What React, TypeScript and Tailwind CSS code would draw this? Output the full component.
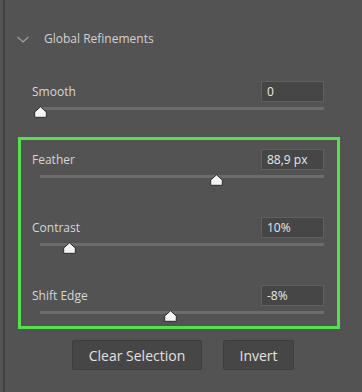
const font = "font-['Open_Sans',_'Noto_Sans',_sans-serif]";

function Thumb({ pct }: { pct: number }) {
  return (
    <svg
      className="absolute top-0 -ml-[6.5px]"
      style={{ left: `${pct}%` }}
      width="13"
      height="12"
      viewBox="0 0 13 12"
    >
      <polygon
        points="6.5,0.8 12.3,6 12.3,11.3 0.7,11.3 0.7,6"
        fill="#f4f4f4"
        stroke="#2c2c2c"
        strokeWidth="1"
        strokeLinejoin="round"
      />
    </svg>
  );
}

function SliderRow({
  label,
  value,
  pct,
}: {
  label: string;
  value: string;
  pct: number;
}) {
  return (
    <div className="flex flex-col">
      <div className="flex h-[21px] items-center justify-between">
        <span className="text-[12px] text-[#d6d6d6]">{label}</span>
        <div className="flex h-[21px] w-[63px] items-center border border-[#5f5f5f] bg-[#464646] pl-[5px] text-[12px] text-[#e8e8e8]">
          {value}
        </div>
      </div>
      <div className="relative mt-[4px] ml-[8px] h-[12px]">
        <div className="absolute inset-x-0 top-[1px] h-[3px] bg-[#6c6c6c]" />
        <Thumb pct={pct} />
      </div>
    </div>
  );
}

export default function App() {
  return (
    <div className={`flex h-[392px] w-[362px] overflow-hidden bg-[#535353] ${font}`}>
      <div className="ml-[3px] w-[2px] bg-[#424242]" />
      <div className="flex flex-1 flex-col">
        {/* header */}
        <div className="mt-[30px] flex h-[18px] items-center pl-[12px]">
          <svg width="12" height="7" viewBox="0 0 12 7" className="text-[#a8a8a8]">
            <polyline points="0.5,0.8 6,6 11.5,0.8" fill="none" stroke="currentColor" strokeWidth="1.1" />
          </svg>
          <span className="ml-[15px] text-[12px] text-[#d2d2d2]">Global Refinements</span>
        </div>

        {/* smooth */}
        <div className="mt-[33px] pr-[38px] pl-[27px]">
          <SliderRow label="Smooth" value="0" pct={0} />
        </div>

        {/* highlighted group */}
        <div className="mt-[19px] mr-[22px] ml-[13px] flex flex-col gap-[31px] border-[3px] border-[#55e04e] pt-[9px] pr-[13px] pb-[4px] pl-[11px]">
          <SliderRow label="Feather" value="88,9 px" pct={62} />
          <SliderRow label="Contrast" value="10%" pct={10.4} />
          <SliderRow label="Shift Edge" value="-8%" pct={46} />
        </div>

        {/* buttons */}
        <div className="mt-[11px] flex gap-[21px] pl-[67px]">
          <button className="h-[30px] w-[130px] rounded-[2px] border border-[#3e3e3e] bg-[#464646] text-[14px] text-[#e2e2e2]">
            Clear Selection
          </button>
          <button className="h-[30px] w-[71px] rounded-[2px] border border-[#3e3e3e] bg-[#464646] text-[14px] text-[#e2e2e2]">
            Invert
          </button>
        </div>
      </div>
    </div>
  );
}
